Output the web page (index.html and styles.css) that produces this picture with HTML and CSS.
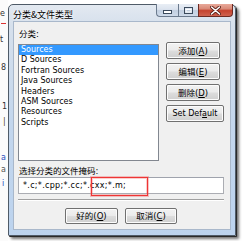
FILE: index.html
```html
<!DOCTYPE html>
<html>
<head>
<meta charset="utf-8">
<link rel="stylesheet" href="styles.css">
</head>
<body>
<div class="stage">
  <div class="bgwin">
    <span class="frag f-e">e</span>
    <span class="frag-line"></span>
    <span class="frag f-t">t</span>
    <span class="frag f-8">8</span>
    <span class="frag f-1">1</span>
    <span class="frag f-bar">|</span>
    <span class="frag f-a">a</span>
    <span class="frag f-a2">a</span>
    <span class="frag f-i">i</span>
  </div>
  <div class="window">
    <div class="titlebar">
      <span class="title">分类&amp;文件类型</span>
      <div class="caption-btns">
        <div class="cbtn min"><svg width="9" height="4" viewBox="0 0 9 4"><rect x="0.5" y="0.5" width="8" height="3" fill="#fff" stroke="#3b4a5c"/></svg></div>
        <div class="cbtn max"><svg width="9" height="7" viewBox="0 0 9 7"><rect x="0.5" y="0.5" width="8" height="6" fill="none" stroke="#3b4a5c"/><rect x="2" y="2.5" width="5" height="2.5" fill="none" stroke="#fff"/></svg></div>
        <div class="cbtn close"><svg width="11" height="9" viewBox="0 0 11 9"><path d="M1.5 1 L9.5 8 M9.5 1 L1.5 8" stroke="#5a1d14" stroke-width="3.2" stroke-linecap="round"/><path d="M1.5 1 L9.5 8 M9.5 1 L1.5 8" stroke="#fff" stroke-width="1.6" stroke-linecap="round"/></svg></div>
      </div>
    </div>
    <div class="client">
      <div class="label">分类:</div>
      <div class="row">
        <ul class="list">
          <li class="sel">Sources</li>
          <li>D Sources</li>
          <li>Fortran Sources</li>
          <li>Java Sources</li>
          <li>Headers</li>
          <li>ASM Sources</li>
          <li>Resources</li>
          <li>Scripts</li>
        </ul>
        <div class="btncol">
          <button class="btn">添加(<u>A</u>)</button>
          <button class="btn">编辑(<u>E</u>)</button>
          <button class="btn">删除(<u>D</u>)</button>
          <button class="btn wide">Set Def<u>a</u>ult</button>
        </div>
      </div>
      <div class="label2">选择分类的文件掩码:</div>
      <div class="inputwrap">
        <div class="input">*.c;*.cpp;*.cc;*.cxx;*.m;</div>
        <div class="mark"></div>
      </div>
      <div class="sep"></div>
      <div class="footer">
        <button class="btn ok">好的(<u>O</u>)</button>
        <button class="btn cancel">取消(<u>C</u>)</button>
      </div>
    </div>
  </div>
</div>
</body>
</html>
```

FILE: styles.css
```css
html, body {
  margin: 0;
  padding: 0;
}
body {
  width: 244px;
  height: 241px;
  overflow: hidden;
  background: #ffffff;
  font-family: "DejaVu Sans", "Noto Sans CJK SC", sans-serif;
  color: #000;
}
.stage {
  display: flex;
  align-items: flex-start;
  width: 244px;
  height: 241px;
}
.bgwin {
  width: 8px;
  height: 241px;
  flex: none;
  position: relative;
  overflow: hidden;
  background: #fbfbfb;
}
.frag {
  position: absolute;
  left: 0;
  font-size: 8px;
  line-height: 8px;
  color: #333;
}
.frag-line {
  position: absolute;
  left: 1px;
  top: 23px;
  width: 5px;
  height: 1px;
  background: #d33;
}
.f-e { top: 10px; }
.f-t { top: 36px; }
.f-8 { top: 64px; left: 1px; }
.f-1 { top: 103px; left: 2px; }
.f-bar { top: 118px; left: 3px; color: #542; }
.f-a { top: 154px; left: 1px; color: #2a4fbf; }
.f-a2 { top: 166px; left: 1px; color: #555; }
.f-i { top: 180px; left: 2px; color: #2a4fbf; }

.window {
  flex: none;
  margin-top: 4px;
  width: 228px;
  height: 232px;
  box-sizing: border-box;
  border: 1px solid #4f5b68;
  border-radius: 5px 5px 1px 1px;
  background: linear-gradient(to bottom, #e3e9f1 0px, #d6e0ec 20px, #c3d6ed 120px, #bcd3ee 232px);
  box-shadow: 1px 1px 0 #2a2a2a, 3px 3px 3px rgba(0,0,0,0.55);
  padding: 0 5px 6px 5px;
  display: flex;
  flex-direction: column;
}
.titlebar {
  height: 17px;
  display: flex;
  align-items: flex-start;
  justify-content: space-between;
}
.title {
  font-size: 9px;
  line-height: 11px;
  margin-top: 4px;
  margin-left: -1px;
  color: #000;
  font-family: "Noto Sans CJK SC", sans-serif;
  text-shadow: 0 0 4px #ffffff, 0 0 2px #ffffff;
}
.caption-btns {
  display: flex;
  margin-right: -3px;
  margin-top: -1px;
}
.cbtn {
  height: 13px;
  box-sizing: border-box;
  border: 1px solid #6b7a8d;
  border-top: 0;
  display: flex;
  align-items: center;
  justify-content: center;
}
.cbtn.min {
  width: 22px;
  border-right: 0;
  border-radius: 0 0 0 4px;
  background: linear-gradient(to bottom, #e9eef5 0%, #dbe3ee 45%, #c2cfe0 55%, #cfdbea 100%);
}
.cbtn.min svg { margin-top: 4px; }
.cbtn.max {
  width: 20px;
  border-right: 0;
  background: linear-gradient(to bottom, #e9eef5 0%, #dbe3ee 45%, #c2cfe0 55%, #cfdbea 100%);
}
.cbtn.close {
  width: 35px;
  border-radius: 0 0 4px 0;
  border-color: #6d2a22;
  background: linear-gradient(to bottom, #e8a99a 0%, #d98a78 40%, #c5432f 55%, #cf6350 100%);
}

.client {
  flex: 1;
  background: #f0f0f0;
  box-shadow: 0 0 0 1px #a9b8cb;
  padding: 6px 6px 0 4px;
  font-size: 8px;
  position: relative;
}
.label, .label2 {
  font-size: 8.5px;
  line-height: 12px;
  height: 12px;
  margin-left: 1px;
}
.row {
  display: flex;
  align-items: flex-start;
  margin-top: 2px;
}
.list {
  list-style: none;
  margin: 2px 0 0 0;
  padding: 0;
  width: 141px;
  height: 117px;
  box-sizing: border-box;
  border: 1px solid #828790;
  background: #fff;
  font-size: 8px;
}
.list li {
  height: 10.4px;
  line-height: 9px;
  padding-left: 2px;
  white-space: nowrap;
}
.list li.sel {
  background: #3399ff;
  color: #fff;
}
.btncol {
  display: flex;
  flex-direction: column;
  gap: 4px;
  margin-left: 7px;
}
.btn {
  width: 54px;
  height: 17px;
  box-sizing: border-box;
  padding: 0;
  margin: 0;
  border: 1px solid #707070;
  border-radius: 2px;
  background: linear-gradient(to bottom, #f2f2f2 0%, #ebebeb 48%, #dddddd 52%, #cfcfcf 100%);
  box-shadow: inset 0 0 0 1px #fcfcfc;
  font-family: "DejaVu Sans", "Noto Sans CJK SC", sans-serif;
  font-size: 8.5px;
  line-height: 14px;
  color: #000;
  text-align: center;
}
.btn.wide {
  width: 58px;
  font-size: 8px;
}
.label2 {
  margin-top: 5px;
  line-height: 11px;
  height: 11px;
}
.inputwrap {
  position: relative;
}
.input {
  width: 206px;
  height: 17px;
  box-sizing: border-box;
  border: 1px solid #abadb3;
  border-top-color: #9fa3ad;
  background: #fff;
  font-size: 8px;
  line-height: 15px;
  letter-spacing: 0.3px;
  padding-left: 4px;
  white-space: nowrap;
}
.mark {
  position: absolute;
  left: 73px;
  top: 0;
  width: 57px;
  height: 19px;
  box-sizing: border-box;
  border: 1px solid #ee3535;
  box-shadow: 0 0 0 1px rgba(240, 90, 90, 0.35), inset 0 0 0 1px rgba(240, 90, 90, 0.3);
}
.sep {
  width: 206px;
  height: 1px;
  margin-top: 5px;
  background: #a0a0a0;
  border-bottom: 1px solid #ffffff;
}
.footer {
  display: flex;
  gap: 7px;
  margin-top: 7px;
  padding-left: 47px;
}
.btn.ok { width: 53px; height: 16px; line-height: 13px; }
.btn.cancel { width: 52px; height: 16px; line-height: 13px; }
```
